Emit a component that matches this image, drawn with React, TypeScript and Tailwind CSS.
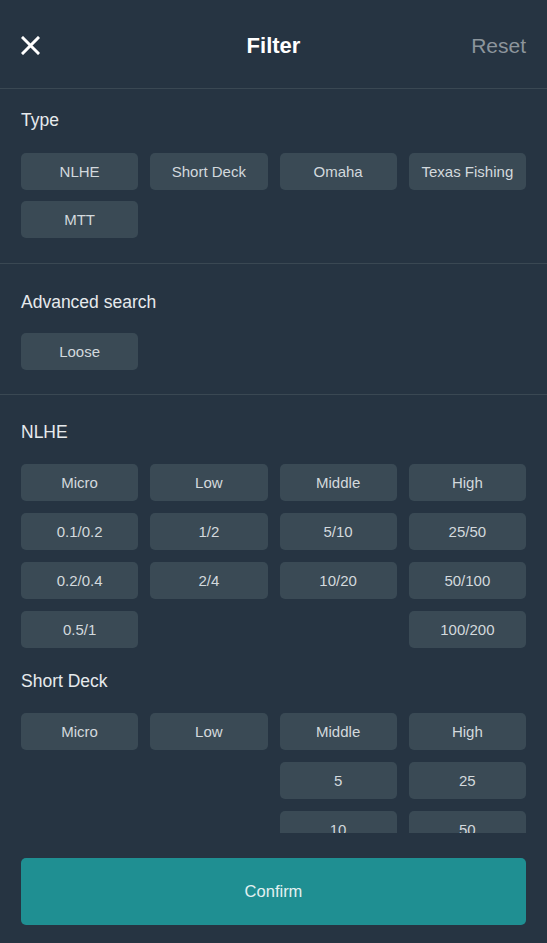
import React from 'react';

const font = { fontFamily: '"Liberation Sans", Arial, sans-serif' };

const Chip: React.FC<{ label: string }> = ({ label }) => (
  <div className="h-[37px] rounded-[5px] bg-[#3a4a55] flex items-center justify-center pt-[1px] text-[15px] text-[#d3d9dd]">
    {label}
  </div>
);

const Label: React.FC<{ children: React.ReactNode }> = ({ children }) => (
  <div className="text-[17.5px] leading-[24px] text-[#e6eaed]">{children}</div>
);

// each stake table is laid out column by column
const nlhe = [
  ['Micro', '0.1/0.2', '0.2/0.4', '0.5/1'],
  ['Low', '1/2', '2/4'],
  ['Middle', '5/10', '10/20'],
  ['High', '25/50', '50/100', '100/200'],
];

const shortDeck = [['Micro'], ['Low'], ['Middle', '5', '10'], ['High', '25', '50']];

const Columns: React.FC<{ cols: string[][] }> = ({ cols }) => (
  <div className="grid grid-cols-4 gap-x-[12px]">
    {cols.map((col, i) => (
      <div key={i} className="flex flex-col gap-y-[12px]">
        {col.map((v) => (
          <Chip key={v} label={v} />
        ))}
      </div>
    ))}
  </div>
);

export default function App() {
  return (
    <div className="h-[943px] w-full flex flex-col bg-[#263442] overflow-hidden" style={font}>
      <div className="h-[88px] shrink-0 flex items-center justify-between px-[21px] pt-[3px] relative">
        <svg width="19" height="19" viewBox="0 0 19 19">
          <path d="M2 2L17 17M17 2L2 17" stroke="#ffffff" strokeWidth="3" strokeLinecap="square" />
        </svg>
        <div className="absolute left-0 right-0 text-center text-[22px] font-bold text-white pointer-events-none">
          Filter
        </div>
        <div className="text-[21px] text-[#8c959c]">Reset</div>
      </div>
      <div className="h-px bg-[#3a4853] shrink-0" />

      <div className="flex-1 overflow-hidden">
        <div className="px-[21px] pt-[19px] pb-[25px]">
          <Label>Type</Label>
          <div className="mt-[21px] grid grid-cols-4 gap-x-[12px] gap-y-[11px]">
            {['NLHE', 'Short Deck', 'Omaha', 'Texas Fishing', 'MTT'].map((t) => (
              <Chip key={t} label={t} />
            ))}
          </div>
        </div>
        <div className="h-px bg-[#3a4853]" />

        <div className="px-[21px] pt-[26px] pb-[24px]">
          <Label>Advanced search</Label>
          <div className="mt-[19px] grid grid-cols-4 gap-x-[12px]">
            <Chip label="Loose" />
          </div>
        </div>
        <div className="h-px bg-[#3a4853]" />

        <div className="px-[21px] pt-[25px]">
          <Label>NLHE</Label>
          <div className="mt-[20px]">
            <Columns cols={nlhe} />
          </div>
          <div className="mt-[21px]">
            <Label>Short Deck</Label>
          </div>
          <div className="mt-[20px]">
            <Columns cols={shortDeck} />
          </div>
        </div>
      </div>

      <div className="shrink-0 px-[21px] pt-[25px] pb-[18px]">
        <div className="h-[67px] rounded-[5px] bg-[#1f8f92] flex items-center justify-center text-[16.5px] text-[#e3f1f1]">
          Confirm
        </div>
      </div>
    </div>
  );
}
